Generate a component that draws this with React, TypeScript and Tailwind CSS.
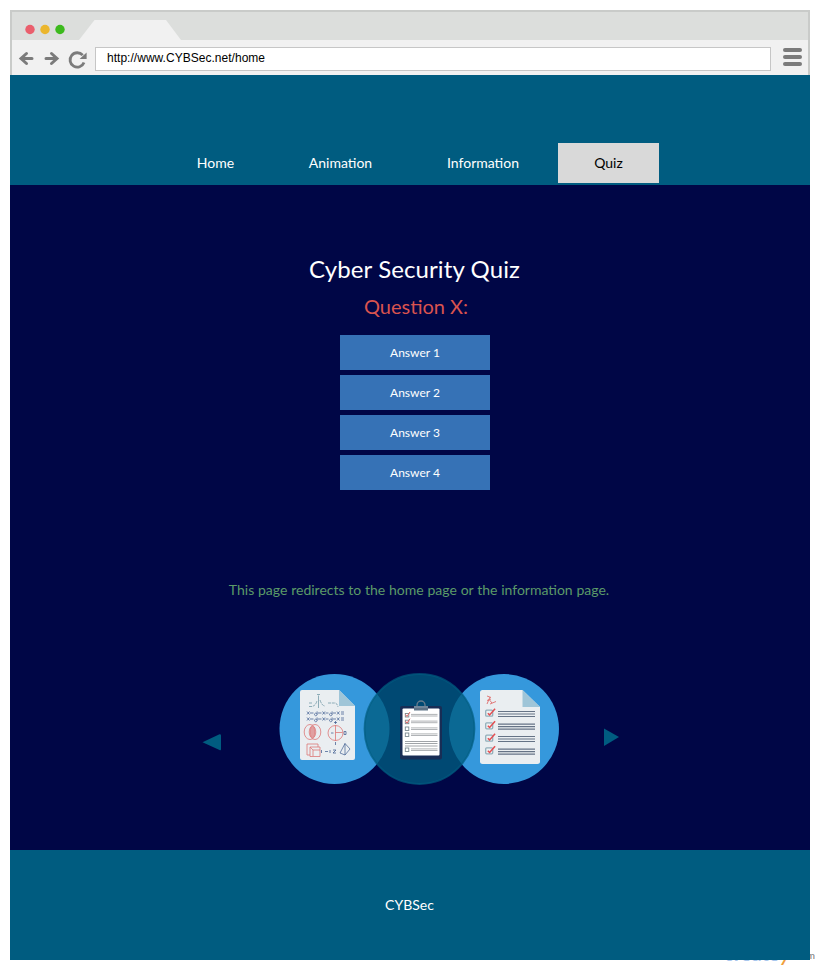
import React from 'react';

const navItems = [
  { label: 'Home', box: 'w-[101px] ml-[155px]' },
  { label: 'Animation', box: 'w-[101px] ml-[24px]' },
  { label: 'Information', box: 'w-[101px] ml-[41.5px]' },
];

const answers = ['Answer 1', 'Answer 2', 'Answer 3', 'Answer 4'];

function BrowserBar() {
  return (
    <header className="h-[65px] shrink-0 border-x-2 border-t-2 border-[#c9cbc9] bg-[#f1f1f1]">
      <div className="flex h-7 items-end bg-[#dcdedc]">
        <svg width="180" height="28" viewBox="12 12 180 28">
          <circle cx="30" cy="29.5" r="4.7" fill="#ea5f6d" />
          <circle cx="45" cy="29.5" r="4.7" fill="#ebb62d" />
          <circle cx="60" cy="29.5" r="4.7" fill="#3cba1d" />
          <path d="M79 40L94.5 20H166L181 40Z" fill="#f1f1f1" />
        </svg>
      </div>
      <div className="flex h-[35px] items-center">
        <svg width="83" height="35" viewBox="12 40 83 35" fill="none" stroke="#7b7b7b" strokeWidth="3" strokeLinecap="round">
          <path d="M32 58.500H21.500M26.500 53.500L21 58.500L26.500 63.500" />
          <path d="M46 58.500H56.500M51.500 53.500L57 58.500L51.500 63.500" />
          <path d="M82.700 55.200A7.200 7.200 0 1 0 84 62.500" strokeWidth="2.800" strokeLinecap="butt" />
          <path d="M86.600 52.500V59H79.600Z" fill="#7b7b7b" stroke="none" />
        </svg>
        <div className="mt-[3px] flex h-6 w-[676px] items-center border border-[#c6c6c6] bg-white pb-[2px] pl-[11px] font-['Liberation_Sans',sans-serif] text-[12px] tracking-[0.025px] text-black">
          http://www.CYBSec.net/home
        </div>
        <div className="mb-[1px] ml-3 flex flex-col gap-[3px]">
          <span className="h-1 w-[19px] rounded-full bg-[#7b7b7b]" />
          <span className="h-1 w-[19px] rounded-full bg-[#7b7b7b]" />
          <span className="h-1 w-[19px] rounded-full bg-[#7b7b7b]" />
        </div>
      </div>
    </header>
  );
}

function Illustration() {
  return (
    <svg className="ml-[57px]" width="284" height="114" viewBox="278 672 284 114">
      <circle cx="334.5" cy="729" r="55" fill="#3598dc" />
      <circle cx="504" cy="729" r="55" fill="#3598dc" />

      {/* maths sheet */}
      <path d="M302 690H339L355 706V758a2 2 0 0 1-2 2H302a2 2 0 0 1-2-2V692a2 2 0 0 1 2-2Z" fill="#eaeef1" />
      <path d="M339 690L355 706H339Z" fill="#9fc5d8" />
      <g fill="none" stroke="#668f9d" strokeWidth=".7">
        <path d="M318.500 695.500V708" />
        <path d="M309 703h3M309 706.500h3q4-1 5-6M320 700q2 6 5 6M328 703h7q2 0 3 4M317 694.500h3" strokeDasharray="3 .8" />
      </g>
      <g fill="none" stroke="#415f91" strokeWidth=".75">
        {[713, 719].map((y) => (
          <path
            key={y}
            d={`M307 ${y - 1.5}l2.500 3m0-3l-2.500 3M310 ${y}h3.500m1 1.500a1.300 1.300 0 1 0 0-.1m2.600-3v3M318 ${y}h3.500m1-1.500l2.500 3m0-3l-2.500 3M325.500 ${y}h3m1 1.500a1.300 1.300 0 1 0 0-.1m2.600-3v3M333 ${y}h3m1-1.500l2.500 3m0-3l-2.500 3M341 ${y - 1}h3m-3 2h3`}
          />
        ))}
        <path d="M335.500 721v3M334 722.500h3M335.500 742v3M331 733h2.500M344 731.500v3h2v-3h-2M321.500 750v3M325 751.500h3M330 750v3M333 750h3l-3 3h3" />
        <path d="M345 743.500l-5 9.500 5 2 5-6ZM345 743.500V755" strokeWidth=".7" />
      </g>
      <g fill="none" stroke="#dc7777" strokeWidth=".8">
        <ellipse cx="310" cy="732" rx="5.800" ry="7.500" />
        <ellipse cx="315" cy="732" rx="5.800" ry="7.500" />
        <ellipse cx="312.500" cy="732" rx="2.300" ry="5.800" fill="#dc7777" fillOpacity=".65" />
        <circle cx="335.500" cy="733" r="7.500" />
        <path d="M335.500 725v16M335.500 732.500h7" />
        <path d="M307 744h11v3M307 744v11h3M310 747h10v9.500h-10ZM310 747l3 3v6M313 750h7" />
      </g>

      {/* translucent highlight over the two sheets */}
      <circle cx="419.500" cy="729" r="55" fill="#005c80" fillOpacity=".78" stroke="#005c80" strokeOpacity=".7" strokeWidth="1.800" />

      {/* clipboard */}
      <rect x="400" y="706" width="42" height="53.500" rx="2" fill="#182d55" />
      <rect x="402.500" y="708.500" width="37" height="47" rx="1" fill="#fff" />
      <path d="M417 706v-1a4 4 0 0 1 8 0v1" fill="none" stroke="#687c8d" strokeWidth="1.300" />
      <path d="M414 706h14v4.500h-14Z" fill="#5d7286" />
      <path d="M414 706h14v2h-14Z" fill="#71869a" />
      {[713.5, 720.2, 727, 733, 748].map((y, i) => (
        <g key={y}>
          <rect x="405.300" y={y} width="3.500" height="3.500" fill="#fff" stroke="#7b8990" strokeWidth=".9" />
          <path d={`M411 ${y + 0.9}h26.500M411 ${y + 2.5}h26.500`} stroke="#b0b3b6" strokeWidth="1" />
          {i < 2 && <path d={`M405.500 ${y + 1}l1.500 2 3-4.500`} fill="none" stroke="#dd6666" strokeWidth="1" />}
        </g>
      ))}
      <path d="M405 741.500h32.500M405 743.500h32.500M405 746h32.500" stroke="#a0a4a8" strokeWidth="1" />

      {/* answer sheet */}
      <path d="M482.500 690H522.500L540 707V761.500a2.500 2.500 0 0 1-2.500 2.500H482.500a2.500 2.500 0 0 1-2.500-2.500V692.500a2.500 2.500 0 0 1 2.500-2.500Z" fill="#eaeef1" />
      <path d="M522.500 690L540 707H522.500Z" fill="#9fc5d8" />
      <path d="M487 696l4 1.500M490 697l-3 7M489.500 700l2.500 3M487 700.500l4-1.500M490 704l6-2.500" fill="none" stroke="#df6c6c" strokeWidth=".9" />
      {[713.2, 725.8, 738.2, 750.8].map((y) => (
        <g key={y} fill="none">
          <rect x="485.700" y={y - 3} width="7" height="6" rx="1" fill="#edf1f3" stroke="#91aeba" strokeWidth="1.300" />
          <path d={`M487.800 ${y}l1.800 1.700 5.500-6.200`} stroke="#e34e51" strokeWidth="1.500" />
          <path d={`M498 ${y - 1.7}h37M498 ${y + 0.8}h37M498 ${y + 3.3}h37`} stroke="#657386" strokeWidth="1.100" />
        </g>
      ))}
    </svg>
  );
}

export default function App() {
  return (
    <div className="relative h-[970px] w-[820px] overflow-hidden bg-white p-[10px] font-[Lato,sans-serif]">
      {/* watermark peeking out from below the window */}
      <div className="absolute top-[937px] left-[724px] flex items-baseline text-[20px] leading-[28px] font-bold whitespace-nowrap">
        <span className="text-[#a9c7ee]">create</span>
        <span className="text-[26px] font-normal text-[#f1a03c] italic">y</span>
      </div>
      <span className="absolute top-[948px] right-[5px] text-[10px] leading-[14px] text-[#777]">.com</span>

      <div className="relative flex h-[950px] w-[800px] flex-col">
        <BrowserBar />
        <nav className="flex h-[110px] shrink-0 items-end bg-[#005c80] pb-[2px] text-[14px] text-white">
          {navItems.map((item) => (
            <a key={item.label} className={`flex h-10 items-center justify-center pb-[2px] ${item.box}`}>
              {item.label}
            </a>
          ))}
          <a className="ml-[24.5px] flex h-10 w-[101px] items-center justify-center bg-[#d9d9d9] pb-[2px] text-black">Quiz</a>
        </nav>
        <main className="flex h-[665px] shrink-0 flex-col bg-[#000646]">
          <h1 className="mt-[69px] ml-[9px] text-center text-[24px] leading-[30px] tracking-[0.1px] text-white">Cyber Security Quiz</h1>
          <h2 className="mt-[9px] ml-[12px] text-center text-[20px] leading-[26px] text-[#d9534f]">Question X:</h2>
          <div className="mt-[16px] ml-[330px] flex w-[150px] flex-col gap-[5px]">
            {answers.map((answer) => (
              <button key={answer} className="h-[35px] bg-[#3672b6] text-[12px] text-white">
                {answer}
              </button>
            ))}
          </div>
          <p className="mt-[90px] ml-[18px] text-center text-[14px] leading-5 [word-spacing:0.2px] text-[#5b9a68]">
            This page redirects to the home page or the information page.
          </p>
          <div className="mt-[72px] flex h-[114px] items-start pl-[192px]">
            <svg className="mt-[62px]" width="19" height="17" viewBox="0 0 19 17">
              <path d="M0.500 8.200L17.500 0.200Q19 0 19 1.500V15Q19 17 17.500 16Z" fill="#005c80" />
            </svg>
            <Illustration />
            <svg className="mt-[56px] ml-[42px]" width="16" height="18" viewBox="0 0 16 18">
              <path d="M0 0.500L15 9L0 18Z" fill="#005c80" />
            </svg>
          </div>
        </main>
        <footer className="flex h-[110px] shrink-0 items-center justify-center bg-[#005c80] pr-[1px] pb-[2px] text-[14px] text-white">CYBSec</footer>
      </div>
    </div>
  );
}
